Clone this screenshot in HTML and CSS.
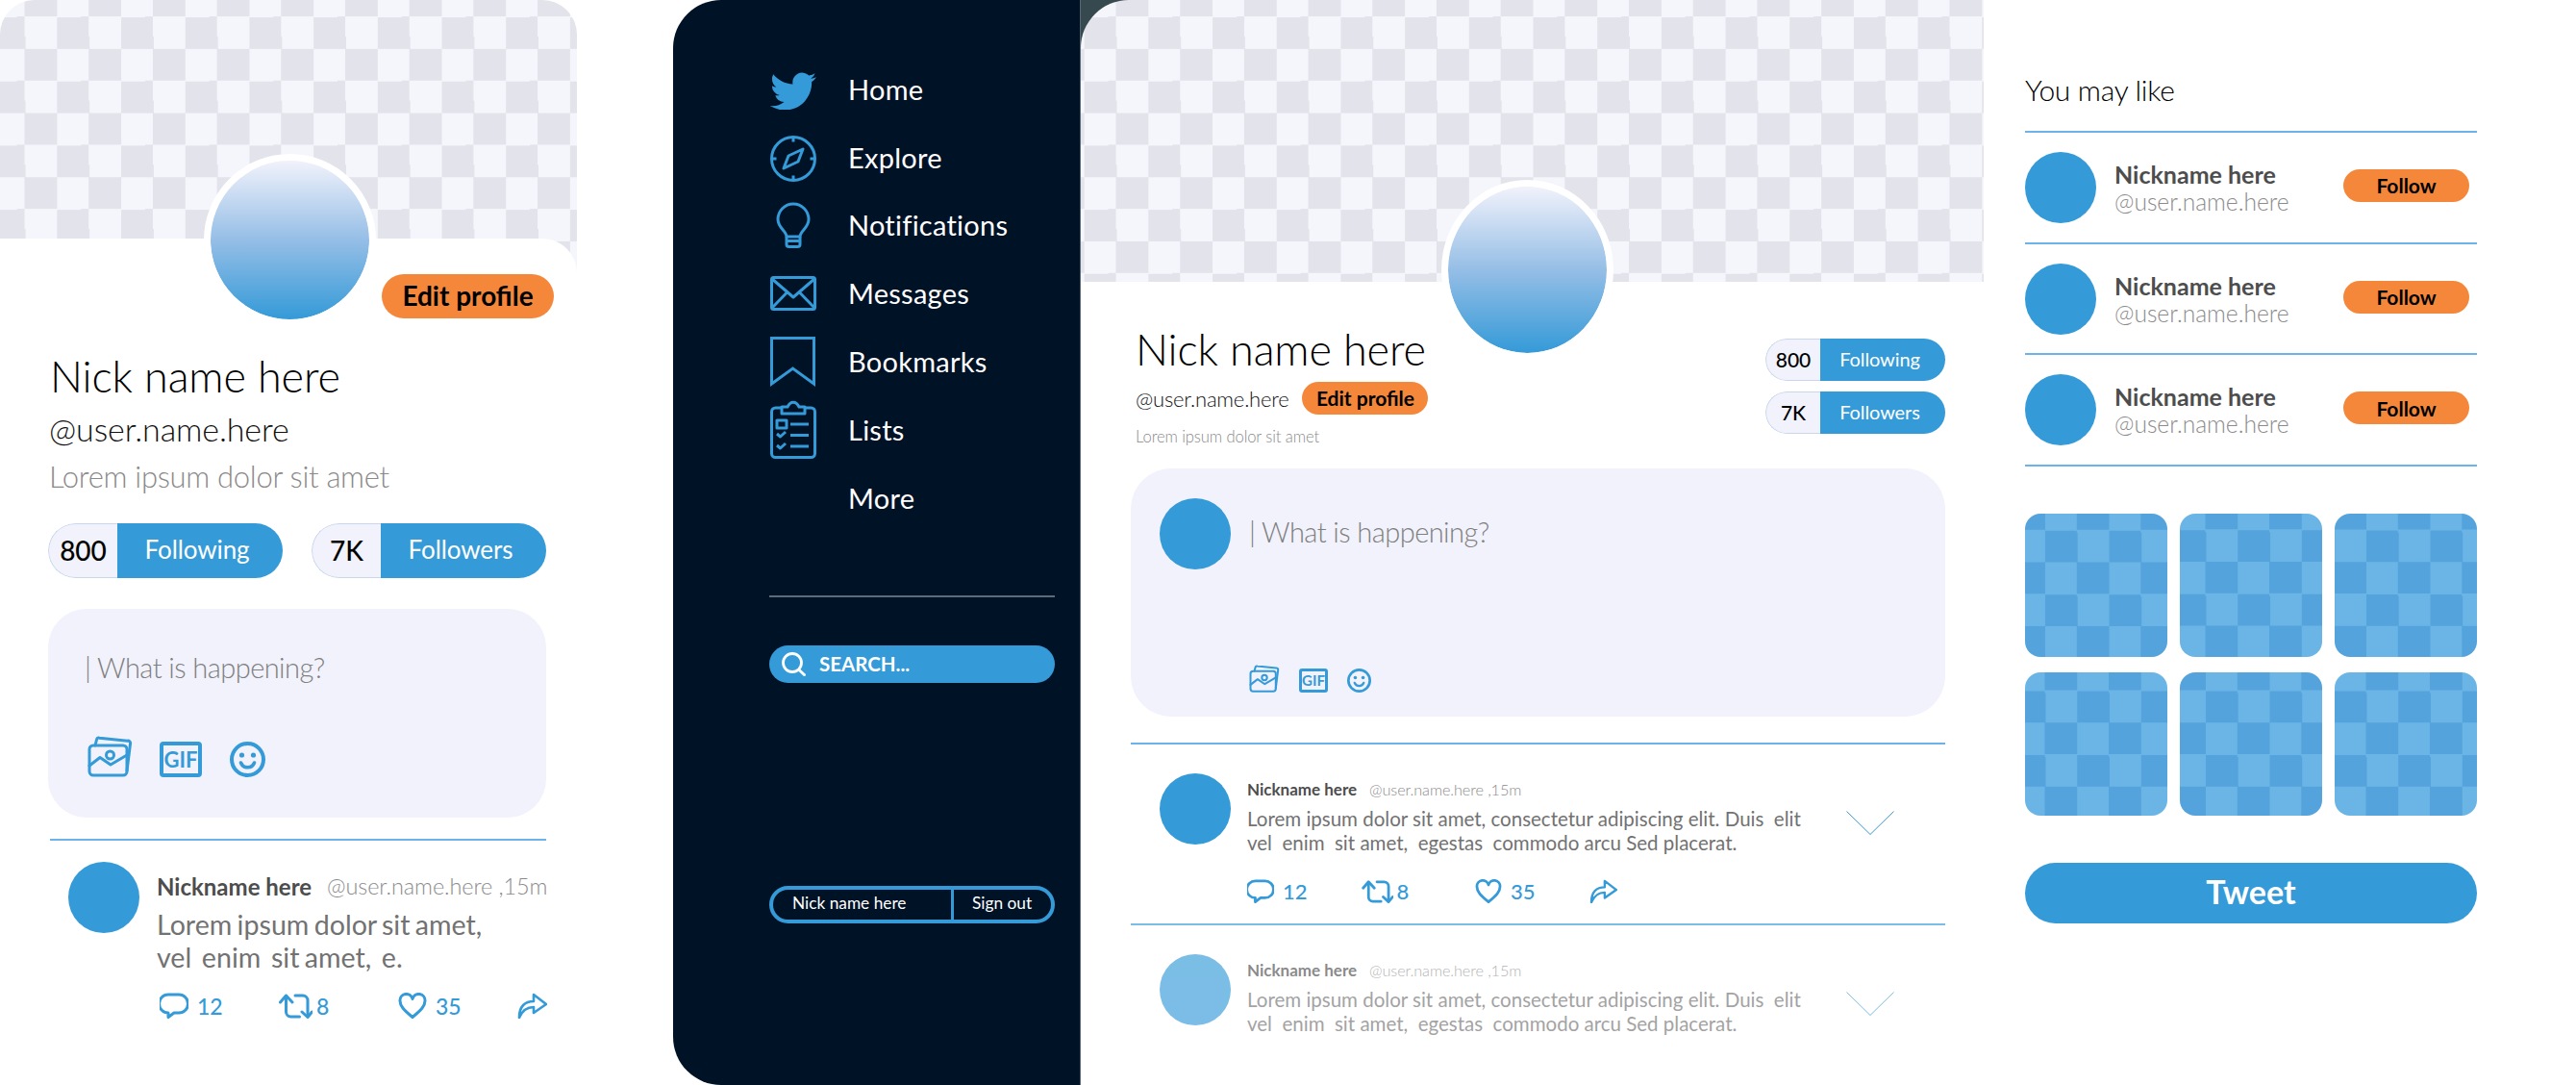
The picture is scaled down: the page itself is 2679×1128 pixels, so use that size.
FILE: index.html
```html
<!DOCTYPE html>
<html lang="en">
<head>
    <meta charset="UTF-8">
    <title>Twitter redesign</title>
    <link rel="stylesheet" href="styles.css">
</head>
<body>
    <svg class="defs" width="0" height="0">
        <symbol id="i-photo" viewBox="0 0 47 43"><g fill="none" stroke="currentColor" stroke-width="3" stroke-linejoin="round" stroke-linecap="round"><rect x="2" y="10" width="39" height="31" rx="4"/><path d="M8 10l1.5-6a2.5 2.5 0 0 1 3-1.800l29 3a2.500 2.500 0 0 1 3 3l-3.500 28"/><circle cx="23.500" cy="20" r="4"/><path d="M2 31l11-8.500 11 7.500 17-10"/></g></symbol>
        <symbol id="i-smile" viewBox="0 0 37 37"><circle cx="18.500" cy="18.500" r="16.500" fill="none" stroke="currentColor" stroke-width="4"/><circle cx="12.500" cy="14" r="2.600" fill="currentColor"/><circle cx="24.500" cy="14" r="2.600" fill="currentColor"/><path d="M11.500 22a7.500 7.500 0 0 0 14 0" fill="none" stroke="currentColor" stroke-width="3.500" stroke-linecap="round"/></symbol>
        <symbol id="i-comment" viewBox="0 0 30 27"><path d="M10 2h10a8.500 8.500 0 0 1 0 19h-5l-6 4.500v-4.500a8.500 8.500 0 0 1 0-19z" fill="none" stroke="currentColor" stroke-width="3" stroke-linejoin="round"/></symbol>
        <symbol id="i-retweet" viewBox="0 0 35 27"><g fill="none" stroke="currentColor" stroke-width="3" stroke-linecap="round" stroke-linejoin="round"><path d="M1.500 10l6-7 6.500 7"/><path d="M7.500 4v16a5 5 0 0 0 5 5h9"/><path d="M17 3h8a5 5 0 0 1 5 5v16"/><path d="M24 20l6 5.500 4.500-5.500"/></g></symbol>
        <symbol id="i-heart" viewBox="0 0 30 27"><path d="M15 25.500C6 18 2 14 2 8.500a6.600 6.600 0 0 1 13-2 6.600 6.600 0 0 1 13 2C28 14 24 18 15 25.500z" fill="none" stroke="currentColor" stroke-width="3" stroke-linejoin="round"/></symbol>
        <symbol id="i-share" viewBox="0 0 31 27"><path d="M2 26C2 14 8 9 17 9V2l13 10-13 9v-6C10 15 5 19 2 26z" fill="none" stroke="currentColor" stroke-width="2.600" stroke-linejoin="round"/></symbol>
        <symbol id="i-chevron" viewBox="0 0 50 25"><path d="M0.500 0.500L25 24.500 49.500 0.500" fill="none" stroke="currentColor" stroke-width="1"/></symbol>
    </svg>

    <!-- mobile profile -->
    <section class="phone">
        <div class="banner phone-banner"></div>
        <div class="phone-card">
            <div class="avatar-big phone-avatar"></div>
            <div class="phone-head"><button class="edit-btn">Edit profile</button></div>
            <h1 class="nick">Nick name here</h1>
            <div class="phone-user">@user.name.here</div>
            <div class="phone-bio">Lorem ipsum dolor sit amet</div>
            <div class="phone-stats">
                <div class="stat"><b class="stat-num">800</b><span class="stat-label">Following</span></div>
                <div class="stat"><b class="stat-num">7K</b><span class="stat-label">Followers</span></div>
            </div>
            <div class="phone-compose">
                <div class="placeholder">| What is happening?</div>
                <div class="tools">
                    <svg class="tool-photo"><use href="#i-photo"/></svg>
                    <span class="tool-gif">GIF</span>
                    <svg class="tool-smile"><use href="#i-smile"/></svg>
                </div>
            </div>
            <div class="phone-rule"></div>
            <article class="phone-tweet">
                <div class="dot"></div>
                <div class="phone-tweet-body">
                    <div class="tweet-meta"><b class="tweet-name">Nickname here</b><span class="tweet-handle">@user.name.here ,15m</span></div>
                    <p class="tweet-text">Lorem ipsum dolor sit amet,<br>vel  enim  sit amet,  e.</p>
                    <div class="actions">
                        <div class="act"><svg class="ico-comment"><use href="#i-comment"/></svg>12</div>
                        <div class="act act-rt"><svg class="ico-retweet"><use href="#i-retweet"/></svg>8</div>
                        <div class="act"><svg class="ico-heart"><use href="#i-heart"/></svg>35</div>
                        <div class="act"><svg class="ico-share"><use href="#i-share"/></svg></div>
                    </div>
                </div>
            </article>
        </div>
    </section>

    <!-- desktop: menu -->
    <nav class="side">
        <ul class="menu">
            <li class="menu-item"><span class="menu-icon"><svg class="nudge-down" width="48" height="39" viewBox="0 0 24 19.500"><path fill="currentColor" d="M23.953 2.570a10 10 0 0 1-2.825.775 4.958 4.958 0 0 0 2.163-2.723c-.951.555-2.005.959-3.127 1.184a4.920 4.920 0 0 0-8.384 4.482C7.690 6.095 4.067 4.130 1.640 1.162a4.822 4.822 0 0 0-.666 2.475c0 1.710.870 3.213 2.188 4.096a4.904 4.904 0 0 1-2.228-.616v.060a4.923 4.923 0 0 0 3.946 4.827 4.996 4.996 0 0 1-2.212.085 4.936 4.936 0 0 0 4.604 3.417 9.867 9.867 0 0 1-6.102 2.105c-.390 0-.779-.023-1.170-.067a13.995 13.995 0 0 0 7.557 2.209c9.053 0 13.998-7.496 13.998-13.985 0-.210 0-.420-.015-.630A9.935 9.935 0 0 0 24 2.590z"/></svg></span>Home</li>
            <li class="menu-item"><span class="menu-icon"><svg class="nudge-down" width="48" height="48" viewBox="0 0 48 48"><g fill="none" stroke="currentColor" stroke-width="3"><circle cx="24" cy="24" r="22.500"/><path d="M24 1.500v5M24 41.500v5M1.500 24h5M41.500 24h5"/><path d="M34 14l-15 7-5 13 15-7z" stroke-linejoin="round"/></g></svg></span>Explore</li>
            <li class="menu-item"><span class="menu-icon"><svg width="36" height="48" viewBox="0 0 36 48"><g fill="none" stroke="currentColor" stroke-width="3" stroke-linejoin="round"><path d="M11 36c0-6-9-9-9-18a16 16 0 0 1 32 0c0 9-9 12-9 18z"/><path d="M11 36v8a2.500 2.500 0 0 0 2.500 2.500h9a2.500 2.500 0 0 0 2.500-2.500v-8"/><path d="M11 40.500h14"/></g></svg></span>Notifications</li>
            <li class="menu-item"><span class="menu-icon"><svg width="48" height="36" viewBox="0 0 48 36"><g fill="none" stroke="currentColor" stroke-width="3" stroke-linejoin="round"><rect x="1.500" y="1.500" width="45" height="33" rx="2"/><path d="M2 3l22 19L46 3M2 33l15.500-16M46 33L30.500 17"/></g></svg></span>Messages</li>
            <li class="menu-item"><span class="menu-icon"><svg width="47" height="52" viewBox="0 0 47 52"><path d="M1.500 1.500h44V49l-22-16-22 16z" fill="none" stroke="currentColor" stroke-width="3"/></svg></span>Bookmarks</li>
            <li class="menu-item"><span class="menu-icon"><svg width="48" height="62" viewBox="0 0 48 62"><g fill="none" stroke="currentColor" stroke-width="3" stroke-linejoin="round"><rect x="1.500" y="9" width="45" height="51.500" rx="4"/><path fill="#001226" d="M12 15V8h6c3-6.500 9-6.500 12 0h6v7z"/><rect x="7" y="22" width="10" height="8"/><path d="M21 26h19M21 37.500h19M21 49h19M7 36l3.500 3 5.500-5M7 48l3.500 3 5.500-5"/></g></svg></span>Lists</li>
            <li class="menu-item"><span class="menu-icon"></span>More</li>
        </ul>
        <div class="side-rule"></div>
        <div class="search">
            <svg width="25" height="25" viewBox="0 0 25 25"><g fill="none" stroke="#fff" stroke-width="2.800"><circle cx="11" cy="11" r="9.500"/><path d="M17.500 18l7 6.500"/></g></svg>
            <span>SEARCH...</span>
        </div>
        <div class="account">
            <span class="account-name">Nick name here</span>
            <span class="account-out">Sign out</span>
        </div>
    </nav>

    <!-- desktop: feed -->
    <main class="feed">
        <div class="banner feed-banner"></div>
        <div class="avatar-big feed-avatar"></div>
        <div class="feed-head">
            <div>
                <h1 class="nick">Nick name here</h1>
                <div class="feed-user-row">
                    <span class="feed-user">@user.name.here</span>
                    <button class="edit-btn edit-btn-sm">Edit profile</button>
                </div>
                <div class="feed-bio">Lorem ipsum dolor sit amet</div>
            </div>
            <div class="feed-stats">
                <div class="stat stat-sm"><b class="stat-num">800</b><span class="stat-label">Following</span></div>
                <div class="stat stat-sm"><b class="stat-num">7K</b><span class="stat-label">Followers</span></div>
            </div>
        </div>
        <div class="feed-compose">
            <div class="dot"></div>
            <div class="feed-compose-body">
                <div class="placeholder">| What is happening?</div>
                <div class="tools tools-sm">
                    <svg class="tool-photo"><use href="#i-photo"/></svg>
                    <span class="tool-gif">GIF</span>
                    <svg class="tool-smile"><use href="#i-smile"/></svg>
                </div>
            </div>
        </div>
        <article class="feed-tweet">
            <div class="dot"></div>
            <div class="feed-tweet-body">
                <div class="tweet-meta"><b class="tweet-name">Nickname here</b><span class="tweet-handle">@user.name.here ,15m</span></div>
                <p class="tweet-text">Lorem ipsum dolor sit amet, consectetur adipiscing elit. Duis  elit<br>vel  enim  sit amet,  egestas  commodo arcu Sed placerat.</p>
                <div class="actions">
                    <div class="act"><svg class="ico-comment"><use href="#i-comment"/></svg>12</div>
                    <div class="act act-rt"><svg class="ico-retweet"><use href="#i-retweet"/></svg>8</div>
                    <div class="act"><svg class="ico-heart"><use href="#i-heart"/></svg>35</div>
                    <div class="act"><svg class="ico-share"><use href="#i-share"/></svg></div>
                </div>
            </div>
            <svg class="chevron"><use href="#i-chevron"/></svg>
        </article>
        <article class="feed-tweet feed-tweet-faded">
            <div class="dot"></div>
            <div class="feed-tweet-body">
                <div class="tweet-meta"><b class="tweet-name">Nickname here</b><span class="tweet-handle">@user.name.here ,15m</span></div>
                <p class="tweet-text">Lorem ipsum dolor sit amet, consectetur adipiscing elit. Duis  elit<br>vel  enim  sit amet,  egestas  commodo arcu Sed placerat.</p>
            </div>
            <svg class="chevron"><use href="#i-chevron"/></svg>
        </article>
    </main>

    <!-- desktop: right column -->
    <aside class="aside">
        <h2 class="aside-title">You may like</h2>
        <div class="like-row">
            <div class="dot"></div>
            <div class="like-who"><b>Nickname here</b><span>@user.name.here</span></div>
            <button class="follow">Follow</button>
        </div>
        <div class="like-row">
            <div class="dot"></div>
            <div class="like-who"><b>Nickname here</b><span>@user.name.here</span></div>
            <button class="follow">Follow</button>
        </div>
        <div class="like-row">
            <div class="dot"></div>
            <div class="like-who"><b>Nickname here</b><span>@user.name.here</span></div>
            <button class="follow">Follow</button>
        </div>
        <div class="media">
            <div class="tile t1"></div>
            <div class="tile t2"></div>
            <div class="tile t3"></div>
            <div class="tile t4"></div>
            <div class="tile t5"></div>
            <div class="tile t6"></div>
        </div>
        <button class="tweet-btn">Tweet</button>
    </aside>
</body>
</html>
```

FILE: styles.css
```css
*{
    box-sizing: border-box;
}
html,body{
    margin: 0;
    height: 100%;
}
body{
    display: flex;
    width: 2679px;
    height: 1128px;
    overflow: hidden;
    background: #fff;
    font-family: "Lato", "Liberation Sans", sans-serif;
    color: #000;
}
.defs{
    position: absolute;
}
h1,h2,p,ul{
    margin: 0;
    padding: 0;
}
button{
    border: 0;
    font-family: inherit;
    padding: 0;
}

/* shared bits */
.banner{
    background-color: #f5f6fb;
    background-image: conic-gradient(#e2e3eb 25%, #f5f6fb 0 50%, #e2e3eb 0 75%, #f5f6fb 0);
    background-size: 66.7px 66.7px;
}
.avatar-big{
    position: absolute;
    width: 179px;
    height: 179px;
    border: 7px solid #fff;
    border-radius: 50%;
    background: linear-gradient(#f1f2fb, #95bee6 50%, #349ad8);
    background-origin: padding-box;
    background-clip: padding-box;
}
.dot{
    flex: none;
    width: 74px;
    height: 74px;
    border-radius: 50%;
    background: #349ad8;
}
.nick{
    font-size: 45px;
    line-height: 54px;
    font-weight: 300;
    letter-spacing: -.1px;
}
.edit-btn{
    width: 179px;
    height: 46px;
    padding-bottom: 3px;
    border-radius: 23px;
    background: #f5873b;
    color: #000;
    font-size: 28px;
    font-weight: 700;
}
.edit-btn-sm{
    width: 131px;
    height: 34px;
    padding-bottom: 2px;
    border-radius: 17px;
    font-size: 21px;
}
.stat{
    display: flex;
    width: 244px;
    height: 57px;
    border-radius: 28.5px;
    overflow: hidden;
    font-size: 26px;
    line-height: 55px;
}
.stat-num{
    width: 72px;
    background: #f1f2fb;
    border: 1px solid #c9d6ec;
    border-right: 0;
    border-radius: 28.5px 0 0 28.5px;
    font-size: 28px;
    font-weight: 500;
    line-height: 54px;
    text-align: center;
}
.stat-label{
    flex: 1;
    background: #349ad8;
    color: #fff;
    text-align: center;
    letter-spacing: -.1px;
    padding-right: 6px;
}
.stat-sm{
    width: 187px;
    height: 44px;
    border-radius: 22px;
    line-height: 42px;
}
.stat-sm .stat-num{
    width: 57px;
    font-size: 21px;
    line-height: 41px;
    border-radius: 22px 0 0 22px;
}
.stat-sm .stat-label{
    font-size: 20px;
}
.placeholder{
    font-size: 29px;
    line-height: 36px;
    font-weight: 300;
    color: #7f7f7f;
    letter-spacing: -.55px;
}
.tools{
    display: flex;
    align-items: flex-end;
    color: #349ad8;
}
.tool-photo{
    width: 47px;
    height: 43px;
}
.tool-gif{
    width: 44px;
    height: 37px;
    margin-left: 28px;
    border: 4px solid #349ad8;
    border-radius: 4px;
    font-size: 22px;
    font-weight: 700;
    line-height: 29px;
    text-align: center;
}
.tool-smile{
    width: 37px;
    height: 37px;
    margin-left: 29px;
}
.tools-sm .tool-photo{
    width: 32px;
    height: 29px;
}
.tools-sm .tool-gif{
    width: 30px;
    height: 25px;
    margin-left: 20px;
    border-width: 3px;
    border-radius: 3px;
    font-size: 15px;
    line-height: 19px;
}
.tools-sm .tool-smile{
    width: 25px;
    height: 25px;
    margin-left: 20px;
}
.tweet-meta{
    display: flex;
    justify-content: flex-start;
}
.tweet-name{
    color: #4d4d4d;
    font-weight: 700;
}
.tweet-handle{
    color: #8c8c8c;
    font-weight: 300;
}
.tweet-text{
    color: #727272;
    white-space: pre-wrap;
}
.actions{
    display: flex;
    color: #349ad8;
}
.act{
    display: flex;
    align-items: center;
    gap: 9px;
    font-size: 23px;
    font-weight: 500;
    height: 27px;
}
.act-rt{
    gap: 4px;
}
.ico-comment,.ico-heart{
    width: 30px;
    height: 27px;
}
.ico-retweet{
    width: 35px;
    height: 27px;
}
.ico-share{
    width: 31px;
    height: 27px;
}

/* mobile profile */
.phone{
    flex: none;
    width: 600px;
    position: relative;
}
.phone-banner{
    height: 283px;
    border-radius: 36px 36px 0 0;
    background-position: -7.3px -15.800px;
}
.phone-card{
    position: relative;
    margin-top: -35px;
    padding: 0 0 0 50px;
    background: #fff;
    border-radius: 0 36px 0 0;
}
.phone-avatar{
    left: 212px;
    top: -88px;
}
.phone-head{
    display: flex;
    justify-content: flex-end;
    align-items: flex-end;
    height: 83px;
    padding-right: 24px;
}
.phone-card .nick{
    margin: 33px 0 0 2px;
}
.phone-user{
    margin: 7px 0 0 1px;
    font-size: 34px;
    line-height: 41px;
    font-weight: 300;
    color: #111;
    letter-spacing: -.1px;
}
.phone-bio{
    margin: 10px 0 0 1px;
    font-size: 31px;
    line-height: 38px;
    font-weight: 300;
    color: #8a8a8a;
    letter-spacing: -.3px;
}
.phone-stats{
    display: flex;
    gap: 30px;
    margin-top: 30px;
}
.phone-compose{
    display: flex;
    flex-direction: column;
    justify-content: space-between;
    width: 518px;
    height: 217px;
    margin-top: 32px;
    padding: 43px 40px 42px 38px;
    border-radius: 40px;
    background: #f1f2fb;
}
.phone-compose .tools{
    margin-left: 3px;
}
.phone-rule{
    width: 516px;
    height: 2px;
    margin: 22px 0 0 2px;
    background: #6db3e9;
}
.phone-tweet{
    display: flex;
    gap: 18px;
    margin-top: 22px;
    padding-left: 21px;
}
.phone-tweet .tweet-meta{
    margin-top: 11px;
    font-size: 24px;
    line-height: 29px;
}
.phone-tweet .tweet-handle{
    margin-left: 16px;
    font-size: 23.500px;
    letter-spacing: -.1px;
}
.phone-tweet .tweet-text{
    margin-top: 8px;
    font-size: 28.600px;
    line-height: 34px;
    word-spacing: -2px;
}
.phone-tweet .actions{
    margin: 20px 0 0 3px;
}
.phone-tweet .act{
    width: 124px;
}
.phone-tweet .act:last-child{
    width: 31px;
}

/* menu */
.side{
    flex: none;
    width: 423px;
    height: 1128px;
    margin-left: 100px;
    padding: 57px 26px 0 100px;
    border-radius: 50px 0 0 50px;
    background: #001226;
}
.menu{
    list-style: none;
}
.menu-item{
    display: flex;
    align-items: center;
    height: 70.800px;
    color: #fff;
    font-size: 29px;
    letter-spacing: .25px;
}
.menu-icon{
    display: flex;
    justify-content: center;
    align-items: center;
    flex: none;
    width: 49px;
    height: 62px;
    margin-right: 33px;
    color: #349ad8;
}
.nudge-down{
    margin-top: 4px;
}
.side-rule{
    height: 2px;
    margin-top: 66px;
    background: #5e6a78;
}
.search{
    display: flex;
    align-items: center;
    gap: 14px;
    height: 39px;
    margin-top: 50px;
    padding-left: 13px;
    border-radius: 20px;
    background: #349ad8;
    color: #fff;
    font-size: 20.500px;
    font-weight: 700;
}
.account{
    display: flex;
    height: 39px;
    margin-top: 211px;
    border: 4px solid #349ad8;
    border-radius: 20px;
    color: #fff;
    font-size: 17.300px;
    line-height: 28px;
}
.account-name{
    width: 188px;
    padding-left: 20px;
    border-right: 3.500px solid #349ad8;
}
.account-out{
    padding-left: 19px;
}

/* feed */
.feed{
    flex: none;
    position: relative;
    width: 940px;
    height: 1128px;
    background: linear-gradient(#36494f, #36494f) 0 0 / 50px 50px no-repeat;
    border-left: 1px solid #5a6673;
}
.feed-banner{
    height: 293px;
    border-radius: 50px 0 0 0;
    background-position: 3.700px -15.800px;
}
.feed-avatar{
    left: 375px;
    top: 187px;
    height: 187px;
}
.feed-head{
    display: flex;
    justify-content: space-between;
    height: 194px;
    padding: 43px 40px 0 57px;
}
.feed-user-row{
    display: flex;
    align-items: center;
    gap: 14px;
    margin-top: 7px;
}
.feed-user{
    font-size: 22px;
    font-weight: 300;
    color: #111;
    letter-spacing: -.2px;
}
.feed-bio{
    margin-top: 13px;
    font-size: 16.600px;
    line-height: 21px;
    font-weight: 300;
    color: #8a8a8a;
    letter-spacing: -.1px;
}
.feed-stats{
    display: flex;
    flex-direction: column;
    gap: 11px;
    margin-top: 16px;
}
.feed-compose{
    display: flex;
    gap: 19px;
    width: 847px;
    height: 258px;
    margin-left: 52px;
    padding: 31px 0 25px 30px;
    border-radius: 42px;
    background: #f1f2fb;
}
.feed-compose-body{
    display: flex;
    flex-direction: column;
    justify-content: space-between;
    padding-top: 17px;
}
.feed-tweet{
    display: flex;
    gap: 17px;
    width: 847px;
    height: 188px;
    margin-left: 52px;
    padding: 30px 0 0 30px;
    border-top: 2px solid #6db3e9;
}
.feed-compose + .feed-tweet{
    margin-top: 27px;
}
.feed-tweet .tweet-meta{
    margin-top: 7px;
    font-size: 17px;
    line-height: 20px;
}
.feed-tweet .tweet-handle{
    margin-left: 13px;
    font-size: 16.300px;
    letter-spacing: -.1px;
}
.feed-tweet .tweet-text{
    margin-top: 8px;
    font-size: 20.500px;
    line-height: 25px;
}
.feed-tweet .actions{
    margin-top: 25px;
}
.feed-tweet .act{
    width: 118.500px;
    height: 25px;
    gap: 9px;
    font-size: 22px;
}
.feed-tweet .act svg{
    height: 25px;
}
.feed-tweet .ico-comment,.feed-tweet .ico-heart{
    width: 28px;
}
.feed-tweet .ico-retweet{
    width: 33px;
}
.feed-tweet .ico-share{
    width: 29px;
}
.feed-tweet .act-rt{
    gap: 4px;
}
.feed-tweet-faded{
    opacity: .65;
    border-top-color: #349ad8;
}
.chevron{
    flex: none;
    width: 50px;
    height: 25px;
    margin: 39px 0 0 auto;
    margin-right: 53px;
    color: #349ad8;
}

/* right column */
.aside{
    flex: none;
    width: 616px;
    padding: 76px 103px 0 43px;
}
.aside-title{
    height: 60px;
    font-size: 30px;
    line-height: 35px;
    font-weight: 300;
    letter-spacing: -.3px;
    color: #000;
    border-bottom: 2px solid #6db3e9;
    box-sizing: content-box;
}
.like-row{
    display: flex;
    align-items: center;
    gap: 19px;
    height: 115.700px;
    border-bottom: 2px solid #6db3e9;
}
.like-who{
    display: flex;
    flex-direction: column;
}
.like-who b{
    color: #4d4d4d;
    font-size: 25px;
    line-height: 30px;
}
.like-who span{
    color: #8c8c8c;
    font-size: 24.600px;
    font-weight: 300;
    line-height: 28px;
}
.follow{
    width: 131px;
    height: 34px;
    margin: 0 8px 4px auto;
    border-radius: 17px;
    background: #f5873b;
    color: #000;
    font-size: 21px;
    font-weight: 700;
}
.media{
    display: grid;
    grid-template-columns: repeat(3, 148px);
    grid-auto-rows: 149px;
    gap: 16px 13px;
    margin-top: 49px;
}
.tile{
    border-radius: 16px;
    background-image: conic-gradient(#55a3dc 25%, #6bb5e6 0 50%, #55a3dc 0 75%, #6bb5e6 0);
    background-size: 66.500px 66.500px;
}
.t1{ background-position: 21px -16px; }
.t2{ background-position: -6.250px -16.500px; }
.t3{ background-position: 33px -16.250px; }
.t4{ background-position: -12.250px -14.250px; }
.t5{ background-position: 27px -14.250px; }
.t6{ background-position: -.250px -14.250px; }
.tweet-btn{
    display: block;
    width: 470px;
    height: 63px;
    margin-top: 49px;
    padding-bottom: 4px;
    border-radius: 32px;
    background: #349ad8;
    color: #fff;
    font-size: 34px;
    font-weight: 700;
}
```
